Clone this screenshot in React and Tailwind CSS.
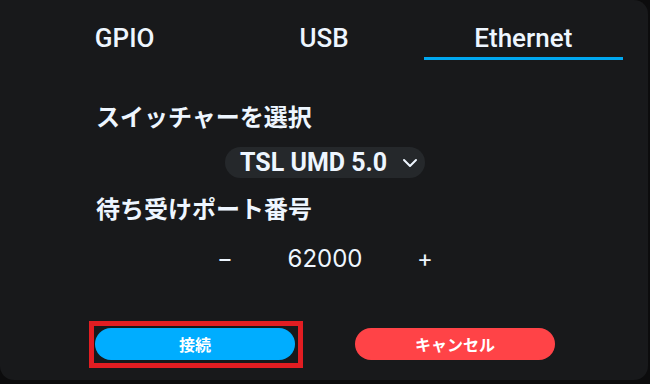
import { useState } from 'react';

const latin = { fontFamily: 'Roboto, "Noto Sans CJK JP", sans-serif' };
const jp = { fontFamily: '"Noto Sans CJK JP", Roboto, sans-serif' };
const num = { fontFamily: 'Inter, Roboto, sans-serif' };

const tabs = ['GPIO', 'USB', 'Ethernet'];

function App() {
  const [active, setActive] = useState(2);
  const [port, setPort] = useState(62000);

  return (
    <div className="w-[650px] h-[384px] bg-[#0c0c0d] overflow-hidden">
      <div
        className="w-[648px] h-[380px] bg-[#18191b] rounded-tr-[14px] rounded-b-[14px] flex flex-col text-[#eef6ff]"
        style={latin}
      >
        <div className="flex px-[25px] pt-[22px]">
          {tabs.map((t, i) => (
            <button
              key={t}
              onClick={() => setActive(i)}
              className={
                'w-[200px] h-[38px] flex justify-center text-[26px] font-medium leading-[32px] border-b-[3px] ' +
                (active === i ? 'border-[#00a8f0]' : 'border-transparent')
              }
            >
              {t}
            </button>
          ))}
        </div>

        <div className="mt-[40px] pl-[96px] text-[24px] font-bold leading-[32px]" style={jp}>
          スイッチャーを選択
        </div>

        <div className="mt-[15px] ml-[225px] w-[200px] h-[31px] rounded-full bg-[#25282b] flex items-center pl-[15px] pr-[7px]">
          <span className="text-[25px] font-bold leading-none">TSL UMD 5.0</span>
          <svg className="ml-auto" width="16" height="10" viewBox="0 0 16 10" fill="none">
            <polyline points="2,2 8,8 14,2" stroke="#eef6ff" strokeWidth="2" strokeLinecap="round" strokeLinejoin="round" />
          </svg>
        </div>

        <div className="mt-[14px] pl-[96px] text-[24px] font-bold leading-[32px]" style={jp}>
          待ち受けポート番号
        </div>

        <div className="mt-[19px] ml-[175px] flex text-[24px] leading-[32px]" style={num}>
          <button className="w-[100px] text-center" onClick={() => setPort(port - 1)}>−</button>
          <div className="w-[100px] text-center">{port}</div>
          <button className="w-[100px] text-center" onClick={() => setPort(port + 1)}>+</button>
        </div>

        <div className="mt-[53px] flex" style={jp}>
          <div className="relative ml-[95px]">
            <button className="w-[200px] h-[32px] rounded-full bg-[#00adff] text-white text-[16px] font-bold">
              接続
            </button>
            <div className="absolute -left-[6px] -right-[8px] -top-[7px] -bottom-[8px] border-[5px] border-[#e21d22] pointer-events-none" />
          </div>
          <button className="ml-[60px] w-[200px] h-[32px] rounded-full bg-[#ff4347] text-white text-[16px] font-bold">
            キャンセル
          </button>
        </div>
      </div>
    </div>
  );
}

export default App;
